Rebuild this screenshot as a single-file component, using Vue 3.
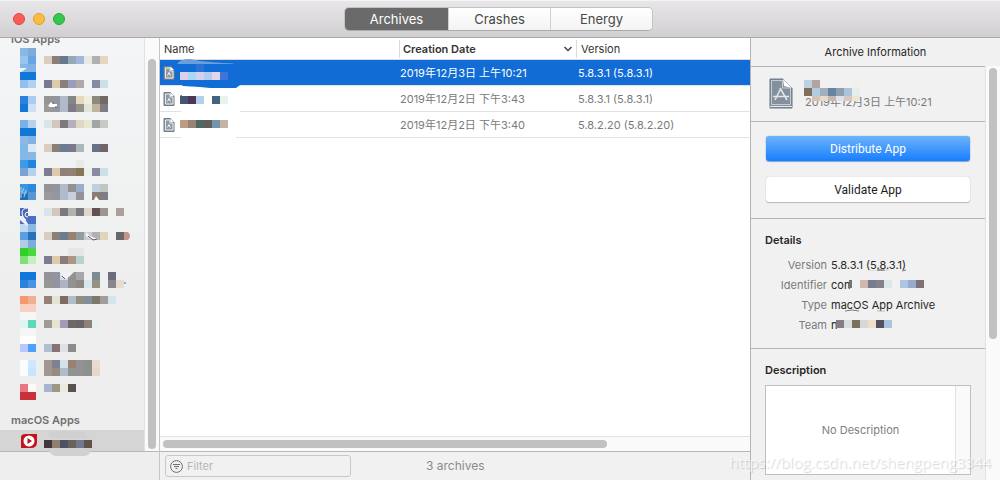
<script setup>
import { ref } from 'vue'

const tabs = ['Archives', 'Crashes', 'Energy']
const activeTab = ref('Archives')
const filter = ref('')

// Each line holds 8px colour blocks: two for the icon, a gap, then the label. "-" leaves a block empty.
const apps = [
  ['8ab8e6 80abd6', '98c4ee 62a6e6 - dccdbd 887f7a 68788c 94a8b8 a3b8d8 eae8e2 b0b1ae e6d6c0', '86b6e6 80b2e4'],
  ['1177d8 1177d8', '92c0ee b0d0f4 - 787890 dccaaa 8a7f7a 9a9cbe b0a9a9 - 888ca2 d0dee8', ''],
  ['2a82da aaccf0 - 949494 9294a2 b0bac8 828686 e8d8c0 f0eddc 8c8a80 706a60', '1177d8 cfe0f5 - 9a9a98 9496a2 b0bac8 7e7a86 96928c e0e6da c0b49e 807c84', ''],
  ['78b0e8 b8d0ee - d8e6ea d4c6ba 7c787c b4b0be e0d8be e8e8d2 9ea6a6 c8cac6', '1177d8 1177d8', '8bb8e6 80b2e2'],
  ['80b8e8 d8e8f6 - dacdc0 8a807a 6c7c92 7e768a acb8b6 - 6a7086 70646a', '84b8e6 88b8e4', '3c9ae8 1f86de - - - - - e8eaea'],
  ['78a4d4 b8d0ec - 7c7c92 dccaaa 8e8078 908274 867656 ecf0ec 888ca2 d0dee8', ''],
  ['3796e2 3086d8 - 949494 9294a2 b0bac8 929294 9aaec8 - c0d0e0 c0c6c4', '2070b8 5a96d4 - 9a9a98 9496a2 b0bac8 cacedc 929298 - 8a7c70 807c84', ''],
  ['4a68b8 f0f2f8 - d8e6ea d4c6ba 7c787c b0b2ae 7a7a80 e0d6cc 5e5252 9e9494 - aaa09e', '5070c0 4a70c4', 'c0d8f0 8cb8e4'],
  ['5a9fe0 2870b8 - dacdc0 8a807a 6c7c92 9a8272 929c9e c8ccd0 b0b0b0 e2d4bc - 66666c', 'b0cce8 80aadc', '30d028 48d840 - - - - e6e6e6 e6e6e6'],
  ['80e078 c4f0c0 - 7c7c92 dccaaa 8a7c78 ac9684 b8d2d0', ''],
  ['1177d8 1177d8 - 949494 9294a2 d8dadf 929292 a6a8ac - 7c8c94 - 6a6c7c', '2a82da 4a94e0 - 969694 9294a2 acb4c4 929292 8e8882 d8e6ee 969280 - 8a868c e8dcd0', ''],
  ['f59870 f0b090 - 968078 e4e4d4 7e6c64 b0bccc 928e7e 848e96 7c786c a09e9a d4e6ec', 'f8d0c4 f8d0c4', 'f6f6f6 f6f6f6'],
  ['e0f4f0 60d8b8 - 9e9a94 e8e2d0 a29ab8 6e6866 6a6464 8a8478 e6eeee', 'f6f6f6 f6f6f6', 'ffffff ffffff'],
  ['b8c8fc 50a0ff - aec0d0 847276 e0e0e8 8c8c8c', ''],
  ['f8fbff d0e8ff - a4968e 7e8096 d2e2e8 9a8272 929296 8e9090 e8dcd0', 'f8fbff c8e4ff - a4968e 948a86 b0bcc8 929290 929292 8e9090 e4d8cc', ''],
  ['e87880 fff8f8 - a6b4ce a09688 eaeade 5a524e', 'c8303a c8303a'],
]

function cells(lines) {
  const out = []
  lines.forEach((line, y) => {
    line.split(' ').forEach((c, x) => {
      if (c && c !== '-') out.push({ x: x * 8, y: y * 8, fill: '#' + c })
    })
  })
  return out
}

const archives = ref([
  {
    date: '2019年12月3日 上午10:21', version: '5.8.3.1 (5.8.3.1)',
    blocks: ['- - 2b72d8', 'ded0ea a8d8f4 d2d2ee b4ccf0 e4d6ea 3f74da'],
    smears: [{ d: 'M-3 4 Q0-1 10-1 L20 1 L42 3 Q53 3 54 4 Z', fill: '#6a9fd9' }, { d: 'M2 25 H60 L56 28 H30 L20 27 L3 26Z', fill: '#116cd6' }],
  },
  {
    date: '2019年12月2日 下午3:43', version: '5.8.3.1 (5.8.3.1)',
    blocks: ['', '465672 4c3856 b2d0ea fffef8 426480 e8f4ea'],
    smears: [{ d: 'M1 25 Q20 23 60 25 V27 H1Z', fill: '#fff' }, { d: 'M1 9 L3 16', fill: 'none', stroke: '#3c2c34' }],
  },
  {
    date: '2019年12月2日 下午3:40', version: '5.8.2.20 (5.8.2.20)',
    blocks: ['', 'bc9c84 9a8274 4e6a60 625e5c 7494ac c4b4a4'],
    smears: [{ d: 'M1 25 Q20 23 56 25 V27 H1Z', fill: '#fff' }],
  },
])
const selected = ref(0)
</script>

<template>
  <div class="window">
    <header class="titlebar">
      <div class="lights">
        <button class="light red" aria-label="Close"></button>
        <button class="light amber" aria-label="Minimize"></button>
        <button class="light green" aria-label="Zoom"></button>
      </div>
      <nav class="segments">
        <button v-for="t in tabs" :key="t" :class="{ on: t === activeTab }" @click="activeTab = t">{{ t }}</button>
      </nav>
    </header>

    <div class="body">
      <aside class="sidebar">
        <div class="side-main">
          <div class="side-list">
            <div class="clipped"><h2>iOS Apps</h2></div>
            <ul>
              <li v-for="(lines, i) in apps" :key="i">
                <svg width="116" :height="lines.length * 8" shape-rendering="crispEdges">
                  <rect v-for="(c, k) in cells(lines)" :key="k" :x="c.x" :y="c.y" width="8" height="8" :fill="c.fill" />
                  <g v-if="i === 0" shape-rendering="auto">
                    <path d="M0 20 L7 20 L0 25Z" fill="#f2f4f5" />
                  </g>
                  <g v-if="i === 2" shape-rendering="auto">
                    <path d="M28 10 L31 6 L34 8 L37 8 L37 11 L30 11Z" fill="#fff" /><path d="M32 7 h2 M35 11 h2" stroke="#555" />
                  </g>
                  <g v-if="i === 6" shape-rendering="auto">
                    <path d="M1 3 V14 M4 4 L2 9 H7 M6 6 L4 13" fill="none" stroke="#a8d0f4" /><path d="M74 16 L76 12 L79 16Z" fill="#fff" />
                  </g>
                  <g v-if="i === 7" shape-rendering="auto">
                    <path d="M0 8 H3 L8 16 L7 18 L0 12Z" fill="#eef1f8" /><path d="M8 0 Q2 0 2 5 Q2 10 6 12 M8 4 Q5 4 5 7 Q5 9 8 9" fill="none" stroke="#fff" />
                  </g>
                  <g v-if="i === 8" shape-rendering="auto">
                    <path d="M66 0 L70 4 L78 7 L72 8 L66 4Z" fill="#f5f5f5" /><path d="M68 4 L73 8 M73 8 L77 7" stroke="#555" />
                    <path d="M104 0 H108 Q112 4 108 8 H104Z" fill="#c49488" />
                  </g>
                  <g v-if="i === 10" shape-rendering="auto">
                    <path d="M40 0 H54 L50 4 L46 7 L41 3Z" fill="#f2f2f2" /><path d="M42 4 L45 7" stroke="#4564a0" /><path d="M105 10 v2" stroke="#3c6aa8" />
                  </g>
                </svg>
              </li>
            </ul>
            <h2 class="mac">macOS Apps</h2>
            <div class="mac-app">
              <svg width="100" height="21">
                <path d="M1 7 Q1 4 6 4 H17 V12 Q17 18 11 18 H1Z" fill="#c3141d" />
                <circle cx="9" cy="11" r="5.500" fill="#fff" /><path d="M7.500 8 L12 11 L7.500 14Z" fill="#b4141c" />
                <path d="M29 2 Q45-1 65 2 L69 8 H30Z" fill="#d0d0d0" />
                <path d="M27 18 H72 Q70 26 64 26 H36 Q30 25 27 18Z" fill="#d2d1d2" />
                <g shape-rendering="crispEdges">
                  <rect v-for="(c, k) in cells(['44363c 8e8070 4c5264 6a6258 70788e 5e5448'])" :key="k" :x="c.x + 24" y="10" width="8" height="8" :fill="c.fill" />
                </g>
              </svg>
            </div>
          </div>
          <div class="vtrack"><div class="thumb"></div></div>
        </div>
        <div class="side-foot"></div>
      </aside>

      <main class="center">
        <div class="table-area">
          <table>
            <thead>
              <tr>
                <th class="c-name">Name</th>
                <th class="c-date"><div class="sort">Creation Date
                  <svg width="10" height="8"><path d="M1.500 2 L5 5.500 L8.500 2" fill="none" stroke="#444" stroke-width="1.500" /></svg>
                </div></th>
                <th class="c-version">Version</th>
              </tr>
            </thead>
            <tbody>
              <tr v-for="(a, i) in archives" :key="i" :class="{ sel: i === selected }" @click="selected = i">
                <td class="name">
                  <div class="name-cell">
                    <svg width="12" height="16" viewBox="0 0 12 16">
                      <path d="M1 1.500 H7.500 L11 5 V14.500 H1Z" fill="#8d99a5" stroke="#6f7a86" />
                      <path d="M2.500 3 H7 V6 H10 V13 H2.500Z" fill="none" stroke="#e8edf1" />
                      <path d="M7.500 1.500 L11 5 H7.500Z" fill="#fff" />
                      <path d="M4.500 10.500 L6 7.500 L7.500 10.500" fill="none" stroke="#f4f7f9" />
                    </svg>
                    <svg class="blur" width="64" height="26">
                      <path v-for="(s, k) in a.smears" :key="'s' + k" :d="s.d" :fill="s.fill" :stroke="s.stroke" />
                      <g shape-rendering="crispEdges">
                        <rect v-for="(c, k) in cells(a.blocks)" :key="k" :x="c.x" :y="c.y + (i === 0 ? 4 : i === 1 ? 2 : 0)" width="8" height="8" :fill="c.fill" />
                      </g>
                    </svg>
                  </div>
                </td>
                <td>{{ a.date }}</td>
                <td>{{ a.version }}</td>
              </tr>
            </tbody>
          </table>
        </div>
        <div class="htrack"><div class="thumb"></div></div>
        <footer class="foot">
          <label class="filter">
            <svg width="13" height="13" viewBox="0 0 13 13" fill="none" stroke="#6e6e6e">
              <circle cx="6.500" cy="6.500" r="5.900" /><path d="M3 4.500 H10 M4 6.500 H9 M5.500 8.500 H7.500" />
            </svg>
            <input v-model="filter" type="text" placeholder="Filter" aria-label="Filter" />
          </label>
          <span class="count">3 archives</span>
        </footer>
      </main>

      <aside class="info">
        <h2 class="info-title">Archive Information</h2>
        <div class="info-body">
          <div class="info-main">
            <section class="summary">
              <svg width="26" height="32" viewBox="0 0 26 32">
                <path d="M2 1 H15 L24 10 V30 H2Z" fill="#84919d" stroke="#697683" />
                <path d="M3.500 2.500 H14.500 V10 H22.500 V26.500 H3.500Z" fill="none" stroke="#c5cdd4" />
                <path d="M15 1 L24 10 L16 8Z" fill="#fff" />
                <path d="M2 28.500 H24" stroke="#e5e9ec" />
                <path d="M7 22 L13 10 M12 10 L19 22 M5 18.500 H21" fill="none" stroke="#e2e7eb" stroke-width="1.500" />
              </svg>
              <div class="when">
                <span>2019年12月3日 上午10:21</span>
                <svg class="blur" width="64" height="24" shape-rendering="crispEdges">
                  <rect v-for="(c, k) in cells(['bcd2e2 b4a69c - - - - f0f1ec', '80705a b0cce2 a0b0bc 6484a0 8ca0b0 acc4d8 e6eeec', '- d6c2b4 e6dac8 c4b8b2 dce2e8 dac6c2 ece4d4'])" :key="k" :x="c.x" :y="c.y" width="8" :height="c.y === 16 ? 5 : 8" :fill="c.fill" />
                </svg>
              </div>
            </section>
            <section class="actions">
              <button class="primary">Distribute App</button>
              <button>Validate App</button>
            </section>
            <section class="details">
              <h3>Details</h3>
              <dl>
                <dt>Version</dt>
                <dd>5.8.3.1 (5.8.3.1)
                  <svg class="under" width="120" height="20"><path d="M37 15 H45 V16 H36Z" fill="#e4dac8" /><path d="M46 14 H53 L54 16 H46Z" fill="#9a989c" /><path d="M54 14 H57 L58 16 H54Z" fill="#d0e0e2" /><path d="M71 16 L75 15" fill="none" stroke="#8a7676" /></svg>
                </dd>
                <dt>Identifier</dt>
                <dd>con
                  <svg class="under" width="120" height="20" shape-rendering="crispEdges">
                    <path d="M18 5 H21 V13 H17Z" fill="#74756f" />
                    <rect v-for="(c, k) in cells(['d2b8ac 747c8e 84808c dce8e8 - acc6e0 98aad0 7e7276'])" :key="k" :x="c.x + 29" y="5" width="8" height="8" :fill="c.fill" />
                  </svg>
                </dd>
                <dt>Type</dt>
                <dd>macOS App Archive
                  <svg class="under" width="120" height="20"><path d="M14 16 Q21 14 28 16" fill="none" stroke="#85777b" /><path d="M46 16 H54" stroke="#cdbdbd" /></svg>
                </dd>
                <dt>Team</dt>
                <dd>n
                  <svg class="under" width="120" height="20" shape-rendering="crispEdges">
                    <rect v-for="(c, k) in cells(['847e84 d8dedf 7c705c d6d8d6 eee0c6 545060 a8c4de'])" :key="k" :x="c.x + 5" y="5" width="8" height="8" :fill="c.fill" />
                  </svg>
                </dd>
              </dl>
            </section>
            <section class="description">
              <h3>Description</h3>
              <div class="box"><span>No Description</span><i></i></div>
            </section>
          </div>
          <div class="vtrack"><div class="thumb"></div></div>
        </div>
      </aside>
    </div>
    <div class="watermark">https://blog.csdn.net/shengpeng3344</div>
  </div>
</template>

<style>
body { margin: 0; }
</style>

<style scoped>
* { box-sizing: border-box; }
.window {
  position: relative; display: flex; flex-direction: column; min-width: 760px; height: 100vh; min-height: 480px;
  overflow: hidden; background: #f1f1f1; color: #262626;
  font: 11px/20px Inter, "Noto Sans CJK SC", sans-serif;
}
h2, h3, ul, dl, dd { margin: 0; padding: 0; }
button { font-family: inherit; padding: 0; border: 0; }
svg { display: block; flex: none; }

.titlebar {
  display: grid; grid-template-columns: 1fr auto 1fr; align-items: center; flex: none; height: 38px; padding-right: 3px;
  border-bottom: 1px solid #a9a9a9; border-top: 1px solid #f4f4f4; background: linear-gradient(#e8e6e8, #d1cfd1);
}
.lights { display: flex; gap: 8px; padding-left: 13px; }
.light { width: 12px; height: 12px; border-radius: 50%; }
.red { background: #fc5b57; border: 1px solid #e2463f; }
.amber { background: #fdbc40; border: 1px solid #dfa023; }
.green { background: #34c84a; border: 1px solid #27aa35; }
.segments {
  display: flex; height: 24px; border: 1px solid #c4c2c4; border-bottom-color: #aaa; border-radius: 5px; overflow: hidden;
}
.segments button {
  width: 102px; background: linear-gradient(#fff, #f4f4f4); color: #484848; font-size: 13px; border-left: 1px solid #d0d0d0;
}
.segments button:first-child { border-left: 0; }
.segments .on { background: #6a6a6a; color: #fff; width: 103px; }

.body { flex: 1; min-height: 0; display: grid; grid-template-columns: 160px minmax(0, 1fr) 250px; }
.sidebar { display: flex; flex-direction: column; min-height: 0; border-right: 1px solid #c6c6c6; background: linear-gradient(#f3f5f6, #eeeeee 60%); }
.side-main { flex: 1; min-height: 0; display: flex; border-bottom: 1px solid #b8b8b8; }
.side-list { flex: 1; min-width: 0; }
.side-list h2 { padding-left: 11px; font-size: 11px; font-weight: 600; color: #707070; }
.clipped { height: 10px; overflow: hidden; display: flex; align-items: flex-end; }
.clipped h2 { line-height: 18px; }
.side-list ul { list-style: none; }
.side-list li { padding-left: 20px; }
.side-list .mac { line-height: 20px; padding-top: 10px; }
.mac-app { height: 21px; padding-left: 20px; background: #d6d5d6; }
.mac-app svg { overflow: visible; }
.side-foot { height: 28px; flex: none; }
.vtrack { flex: none; width: 15px; padding: 21px 3px 2px; border-left: 1px solid #e2e2e2; background: #fafafa; }
.thumb { border-radius: 4px; background: #c1c1c1; }
.vtrack .thumb { width: 8px; height: 100%; }

.center { display: flex; flex-direction: column; min-height: 0; }
.table-area { flex: 1; min-height: 0; background: #fff; }
table { width: 100%; border-collapse: separate; border-spacing: 0; table-layout: fixed; }
th { height: 22px; padding: 0; border-bottom: 1px solid #dcdcdc; text-align: left; font-weight: 400; color: #333; line-height: 20px; }
.c-name { padding-left: 4px; }
.c-date { width: 178px; font-weight: 600; }
.c-version { width: 173px; padding-left: 4px; }
.sort { display: flex; align-items: center; justify-content: space-between; padding: 0 3px 0 3px; border: solid #dcdcdc; border-width: 0 1px; line-height: 18px; }
td { height: 26px; padding: 0 0 0 1px; border-bottom: 1px solid #e2e2e2; color: #7a7a7a; white-space: nowrap; }
td.name { padding-left: 2px; }
.sel td { background: #116cd6; color: #fff; }
.name-cell { position: relative; display: flex; align-items: center; height: 25px; padding-left: 1px; }
.name-cell .blur { position: absolute; left: 18px; top: 0; overflow: visible; }
.htrack { flex: none; height: 16px; padding: 3px; border-top: 1px solid #e2e2e2; border-bottom: 1px solid #b8b8b8; background: #fafafa; }
.htrack .thumb { width: 76%; height: 8px; }
.foot { flex: none; display: flex; align-items: center; gap: 75px; height: 28px; padding-left: 5px; }
.filter { display: flex; align-items: center; gap: 4px; width: 186px; height: 22px; padding-left: 4px; border: 1px solid #c8c8c8; border-radius: 3px; }
.filter input { flex: 1; min-width: 0; border: 0; padding: 0; outline: 0; background: none; color: #333; font: inherit; }
.filter input::placeholder { color: #b4b4b4; opacity: 1; }
.count { color: #8b8b8b; font-size: 12px; }

.info { display: flex; flex-direction: column; min-height: 0; border-left: 1px solid #b4b4b4; }
.info-title { flex: none; height: 28px; line-height: 28px; text-align: center; font-size: 11px; font-weight: 400; }
.info-body { flex: 1; min-height: 0; display: flex; }
.info-main { flex: 1; min-width: 0; }
.info-main section { padding: 0 14px; border-top: 1px solid #b4b4b4; }
.info .vtrack { padding-top: 2px; }
.info .vtrack .thumb { height: 66%; }
.info-main .summary { display: flex; align-items: center; gap: 11px; height: 55px; padding-left: 17px; color: #7a7a7a; }
.when { position: relative; padding-top: 16px; white-space: nowrap; }
.when .blur { position: absolute; left: -1px; top: 4px; }
.info-main .actions { display: flex; flex-direction: column; gap: 16px; height: 97px; padding-top: 14px; }
.actions button {
  height: 25px; margin: 0 1px; border-radius: 3px; background: #fff; box-shadow: 0 0 1px #aaa, 0 1px 1px #bbb;
  color: #1c1c1c; font: 12px Roboto, sans-serif;
}
.actions .primary { background: linear-gradient(#6cb3fa, #187efd); color: #fff; box-shadow: 0 0 1px #2e7fe0, 0 1px 1px #8aa8dc; }
h3 { font-size: 11px; font-weight: 600; line-height: 20px; }
.info-main .details { height: 130px; padding-top: 11px; }
dl { display: grid; grid-template-columns: 62px 1fr; column-gap: 4px; padding-top: 5px; white-space: nowrap; }
dt { text-align: right; color: #7a7a7a; }
dd { position: relative; }
.under { position: absolute; left: 0; top: 0; }
.info-main .description { padding-top: 11px; }
.box { display: flex; height: 90px; margin-top: 5px; border: 1px solid #c0c0c0; background: #fff; color: #808080; }
.box span { flex: 1; text-align: center; line-height: 88px; }
.box i { width: 15px; border-left: 1px solid #e2e2e2; background: #fafafa; }
.watermark {
  position: absolute; right: 9px; bottom: 8px; color: rgba(255, 255, 255, 0.7); pointer-events: none;
  font: 15px/20px "Open Sans", sans-serif; text-shadow: 1px 1px 1px rgba(0, 0, 0, 0.16);
}
</style>
